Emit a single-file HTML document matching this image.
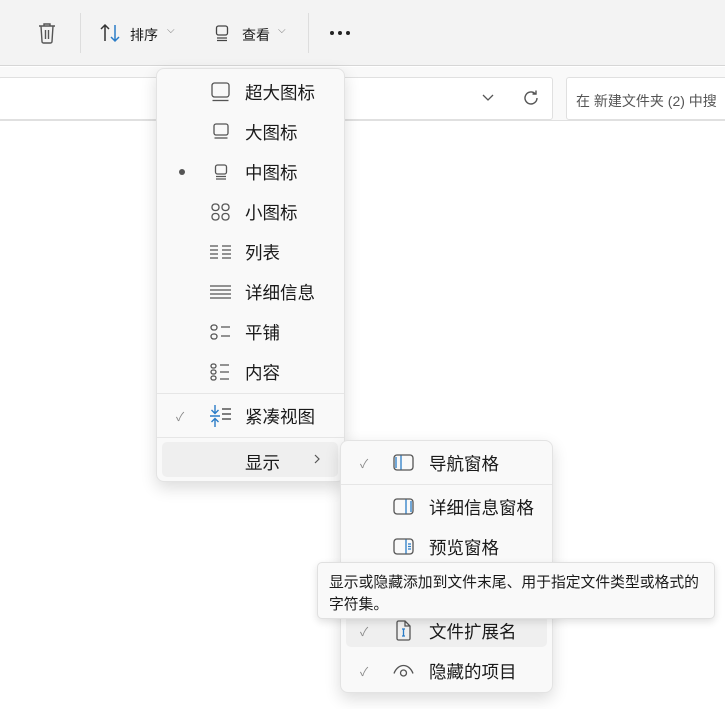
<!DOCTYPE html>
<html><head><meta charset="utf-8"><style>
*{margin:0;padding:0;box-sizing:border-box}
body{width:725px;height:709px;overflow:hidden;background:#fff;font-family:"Liberation Sans","Noto Sans CJK SC",sans-serif;color:#1a1a1a;position:relative}
.abs{position:absolute}
.tb{left:0;top:0;width:725px;height:66px;background:#f3f3f3;border-bottom:1px solid #d6d6d6}
.bar{left:0;top:67px;width:725px;height:54px;background:#f9f9f9;border-bottom:1px solid #e0e0e0}
.menu{background:#f9f9f9;border:1px solid #e3e3e3;border-radius:8px;box-shadow:0 6px 16px rgba(0,0,0,.14)}
.it{position:absolute;font-size:17.5px;line-height:20px}
.sep{position:absolute;height:1px;background:#e6e6e6}
svg{position:absolute;overflow:visible}
.chk{position:absolute;font-size:12px;color:#888}
</style></head><body>
<div class="abs tb"></div>
<svg style="left:37px;top:22px" width="20" height="22" viewBox="0 0 20 22" fill="none" stroke="#555" stroke-width="1.4"><path d="M2 4h16M7 4V2h6v2M4 4l1 15.5c0 .8.6 1.5 1.5 1.5h7c.9 0 1.5-.7 1.5-1.5L16 4M8.5 8v9M11.5 8v9"/></svg>
<div class="abs" style="left:80px;top:13px;width:1px;height:40px;background:#ddd"></div>
<svg style="left:100px;top:24px" width="22" height="18" viewBox="0 0 22 18" fill="none" stroke-width="1.5"><path d="M5 17V1M1 5l4-4 4 4" stroke="#333"/><path d="M15 1v16M11 13l4 4 4-4" stroke="#2a7cc7"/></svg>
<div class="abs" style="left:130px;top:25px;font-size:14px">排序</div>
<div class="abs" style="left:167px;top:25px;font-size:10px;color:#777">⌵</div>
<svg style="left:215px;top:25px" width="14" height="16" viewBox="0 0 14 16" fill="none" stroke="#444" stroke-width="1.3"><rect x="1.5" y="1" width="11" height="9" rx="2"/><path d="M2 13h10M2 15.5h10"/></svg>
<div class="abs" style="left:242px;top:25px;font-size:14px">查看</div>
<div class="abs" style="left:278px;top:25px;font-size:10px;color:#777">⌵</div>
<div class="abs" style="left:308px;top:13px;width:1px;height:40px;background:#ddd"></div>
<div class="abs" style="left:330px;top:31px;width:4px;height:4px;border-radius:2px;background:#222"></div>
<div class="abs" style="left:338px;top:31px;width:4px;height:4px;border-radius:2px;background:#222"></div>
<div class="abs" style="left:346px;top:31px;width:4px;height:4px;border-radius:2px;background:#222"></div>
<div class="abs bar"></div>
<div class="abs" style="left:-2px;top:77px;width:555px;height:43px;background:#fff;border:1px solid #e0e0e0;border-radius:3px"></div>
<svg style="left:482px;top:94px" width="12" height="7" viewBox="0 0 12 7" fill="none" stroke="#555" stroke-width="1.3"><path d="M1 1l5 5 5-5"/></svg>
<svg style="left:522px;top:89px" width="18" height="18" viewBox="0 0 18 18" fill="none" stroke="#555" stroke-width="1.4"><path d="M15 9a6 6 0 1 1-2-4.5M14 1.5V5h-3.5"/></svg>
<div class="abs" style="left:566px;top:77px;width:170px;height:43px;background:#fff;border:1px solid #e0e0e0;border-radius:3px"></div>
<div class="abs" style="left:576px;top:91px;font-size:14px;color:#555;white-space:nowrap">在 新建文件夹 (2) 中搜</div>

<div class="abs menu" style="left:156px;top:68px;width:189px;height:414px"></div>
<svg style="left:211px;top:82px" width="19" height="20" viewBox="0 0 19 20" fill="none" stroke="#555" stroke-width="1.3"><rect x="1" y="1" width="17" height="14" rx="2.5"/><path d="M1.5 18.5h16"/></svg>
<div class="it" style="left:245px;top:83px">超大图标</div>
<svg style="left:213px;top:123px" width="16" height="18" viewBox="0 0 16 18" fill="none" stroke="#555" stroke-width="1.3"><rect x="1" y="1" width="14" height="11" rx="2"/><path d="M1.5 15h13"/></svg>
<div class="it" style="left:245px;top:123px">大图标</div>
<div class="abs" style="left:179px;top:169px;width:6px;height:6px;border-radius:3px;background:#555"></div>
<svg style="left:214px;top:164px" width="14" height="16" viewBox="0 0 14 16" fill="none" stroke="#555" stroke-width="1.3"><rect x="1.5" y="1" width="11" height="9" rx="2"/><path d="M2 12.5h10M2 15h10"/></svg>
<div class="it" style="left:245px;top:163px">中图标</div>
<svg style="left:211px;top:203px" width="19" height="18" viewBox="0 0 19 18" fill="none" stroke="#555" stroke-width="1.3"><rect x="1" y="1" width="7" height="6.5" rx="3"/><rect x="11" y="1" width="7" height="6.5" rx="3"/><rect x="1" y="10.5" width="7" height="6.5" rx="3"/><rect x="11" y="10.5" width="7" height="6.5" rx="3"/></svg>
<div class="it" style="left:245px;top:203px">小图标</div>
<svg style="left:210px;top:245px" width="21" height="14" viewBox="0 0 21 14" fill="none" stroke="#555" stroke-width="1.3"><path d="M0 1h8M0 5h8M0 9h8M0 13h8M12 1h9M12 5h9M12 9h9M12 13h9"/></svg>
<div class="it" style="left:245px;top:243px">列表</div>
<svg style="left:210px;top:285px" width="21" height="14" viewBox="0 0 21 14" fill="none" stroke="#555" stroke-width="1.3"><path d="M0 1h21M0 5h21M0 9h21M0 13h21"/></svg>
<div class="it" style="left:245px;top:283px">详细信息</div>
<svg style="left:210px;top:324px" width="21" height="16" viewBox="0 0 21 16" fill="none" stroke="#555" stroke-width="1.3"><rect x="1" y="1" width="6" height="5" rx="2.5"/><rect x="1" y="10" width="6" height="5" rx="2.5"/><path d="M11 3h9M11 12h9"/></svg>
<div class="it" style="left:245px;top:323px">平铺</div>
<svg style="left:210px;top:363px" width="21" height="18" viewBox="0 0 21 18" fill="none" stroke="#555" stroke-width="1.3"><rect x="1" y="1" width="5" height="4" rx="2"/><rect x="1" y="7" width="5" height="4" rx="2"/><rect x="1" y="13" width="5" height="4" rx="2"/><path d="M10 2h9M10 9h9M10 16h9"/></svg>
<div class="it" style="left:245px;top:363px">内容</div>
<div class="sep" style="left:157px;top:393px;width:187px"></div>
<div class="chk" style="left:176px;top:408px">✓</div>
<svg style="left:210px;top:405px" width="21" height="22" viewBox="0 0 21 22" fill="none" stroke-width="1.4"><path d="M5 0v8M1.5 5l3.5 3.5L8.5 5M0 11h10M5 22v-8M1.5 17l3.5-3.5L8.5 17" stroke="#2a7cc7"/><path d="M12 4h9M12 9h9M12 14h9" stroke="#555"/></svg>
<div class="it" style="left:245px;top:407px">紧凑视图</div>
<div class="sep" style="left:157px;top:437px;width:187px"></div>
<div class="abs" style="left:162px;top:442px;width:176px;height:35px;background:#efefef;border-radius:5px"></div>
<div class="it" style="left:245px;top:453px">显示</div>
<svg style="left:314px;top:454px" width="6" height="10" viewBox="0 0 6 10" fill="none" stroke="#555" stroke-width="1.2"><path d="M1 1l4 4-4 4"/></svg>

<div class="abs menu" style="left:340px;top:440px;width:213px;height:253px"></div>
<div class="chk" style="left:360px;top:455px">✓</div>
<svg style="left:393px;top:454px" width="21" height="17" viewBox="0 0 21 17" fill="none" stroke-width="1.3"><rect x="1" y="1" width="19" height="15" rx="3" stroke="#555"/><path d="M8 1.5v14M3 3v11" stroke="#2a7cc7"/></svg>
<div class="it" style="left:429px;top:454px">导航窗格</div>
<div class="sep" style="left:341px;top:484px;width:211px"></div>
<svg style="left:393px;top:498px" width="21" height="17" viewBox="0 0 21 17" fill="none" stroke-width="1.3"><rect x="1" y="1" width="19" height="15" rx="3" stroke="#555"/><path d="M13 1.5v14M18 3v11" stroke="#2a7cc7"/></svg>
<div class="it" style="left:429px;top:498px">详细信息窗格</div>
<svg style="left:393px;top:538px" width="21" height="17" viewBox="0 0 21 17" fill="none" stroke-width="1.3"><rect x="1" y="1" width="19" height="15" rx="3" stroke="#555"/><path d="M13 1.5v14M15 6h3M15 8.5h3M15 11h3" stroke="#2a7cc7"/></svg>
<div class="it" style="left:429px;top:538px">预览窗格</div>
<div class="abs" style="left:346px;top:615px;width:201px;height:32px;background:#efefef;border-radius:5px"></div>
<div class="chk" style="left:360px;top:623px">✓</div>
<svg style="left:396px;top:620px" width="15" height="21" viewBox="0 0 15 21" fill="none" stroke-width="1.3"><path d="M1 2.5A1.5 1.5 0 0 1 2.5 1H9l5 5v12.5a1.5 1.5 0 0 1-1.5 1.5h-10A1.5 1.5 0 0 1 1 18.5z M9 1v5h5" stroke="#555"/><path d="M6 9h3M7.5 9v7M6 16h3" stroke="#2a7cc7"/></svg>
<div class="it" style="left:429px;top:622px">文件扩展名</div>
<div class="chk" style="left:360px;top:663px">✓</div>
<svg style="left:393px;top:664px" width="21" height="13" viewBox="0 0 21 13" fill="none" stroke="#555" stroke-width="1.3"><path d="M1 9.5C3 4 7 1.5 10.5 1.5S18 4 20 9.5"/><circle cx="10.5" cy="9" r="3"/></svg>
<div class="it" style="left:429px;top:662px">隐藏的项目</div>

<div class="abs" style="left:317px;top:562px;width:398px;height:57px;background:#f9f9f9;border:1px solid #e0e0e0;border-radius:5px;box-shadow:0 3px 8px rgba(0,0,0,.12);padding:9px 11px;font-size:14.8px;line-height:22px;color:#1a1a1a">显示或隐藏添加到文件末尾、用于指定文件类型或格式的字符集。</div>
</body></html>
